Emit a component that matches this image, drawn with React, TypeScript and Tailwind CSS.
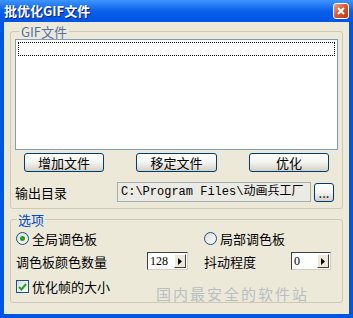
import React from 'react';

const cjk = '"SimSun", "Noto Sans CJK SC", "Liberation Mono", monospace';
const mono = '"Liberation Mono", "Noto Sans CJK SC", monospace';

// XP style push button
const XpButton: React.FC<{ label: string; className?: string }> = ({ label, className }) => (
  <button
    className={`h-[19px] rounded-[3px] border border-[#003C74] bg-gradient-to-b from-[#FFFFFF] via-[#F3F3EF] to-[#D6D0C5] text-[13px] leading-none text-black ${className ?? ''}`}
  >
    {label}
  </button>
);

const Radio: React.FC<{ checked?: boolean; label: string }> = ({ checked, label }) => (
  <div className="flex items-center gap-[3px]">
    <span className="flex h-[13px] w-[13px] items-center justify-center rounded-full border border-[#1C5180] bg-gradient-to-br from-[#DCDCD7] to-[#FFFFFF]">
      {checked && <span className="h-[5px] w-[5px] rounded-full bg-[#21A121]" />}
    </span>
    <span className="text-[13px] leading-none">{label}</span>
  </div>
);

const Spin: React.FC<{ value: string; className?: string }> = ({ value, className }) => (
  <div className={`flex h-[18px] items-center border border-t-[#404040] border-l-[#404040] border-b-[#D4D0C8] border-r-[#D4D0C8] bg-white ${className ?? ''}`}>
    <span className="flex-1 pl-[2px] text-[12px] leading-none" style={{ fontFamily: '"Liberation Serif", serif' }}>{value}</span>
    <span className="mr-[1px] flex h-[14px] w-[12px] items-center justify-center border border-t-white border-l-white border-b-[#404040] border-r-[#404040] bg-[#ECE9D8]">
      <svg width="4" height="7" viewBox="0 0 4 7"><path d="M0 0 L4 3.5 L0 7 Z" fill="#000" /></svg>
    </span>
  </div>
);

export default function App() {
  return (
    <div className="relative flex h-[318px] w-[353px] flex-col bg-[#0055E5] text-black" style={{ fontFamily: cjk }}>
      {/* title bar */}
      <div className="flex h-[22px] items-center justify-between bg-gradient-to-b from-[#3D95FF] via-[#0A5FEA] to-[#0055E5] pl-[4px] pr-[4px]">
        <span className="text-[13px] font-bold text-white" style={{ textShadow: '1px 1px 0 #0A1E70' }}>批优化GIF文件</span>
        <span className="flex h-[16px] w-[16px] items-center justify-center rounded-[3px] border border-white bg-gradient-to-br from-[#E8A08A] via-[#D8562E] to-[#B83A14]">
          <svg width="8" height="8" viewBox="0 0 8 8"><path d="M1 1 L7 7 M7 1 L1 7" stroke="#fff" strokeWidth="2" /></svg>
        </span>
      </div>

      {/* client area */}
      <div className="mx-[4px] mb-[4px] flex flex-1 flex-col bg-[#ECE9D8] px-[6px] pt-[3px]">
        <fieldset className="rounded-[3px] border border-[#D0C9B8] px-[4px] pb-[6px]">
          <legend className="ml-[4px] px-[2px] text-[13px] leading-[13px] text-[#5470A8]">GIF文件</legend>
          <div className="mt-[1px] h-[111px] border border-[#7F9DB9] bg-white p-[2px]">
            <div className="h-[14px] border border-dotted border-black" />
          </div>
          <div className="mt-[3px] flex justify-between px-[9px]">
            <XpButton label="增加文件" className="w-[80px]" />
            <XpButton label="移定文件" className="w-[81px]" />
            <XpButton label="优化" className="w-[80px]" />
          </div>
          <div className="mt-[10px] flex items-center">
            <span className="w-[102px] text-[13px] leading-none">输出目录</span>
            <div
              className="flex h-[20px] w-[194px] items-center whitespace-nowrap border border-[#A5ACB2] bg-[#EBEBE4] pl-[3px] text-[12px] leading-none"
              style={{ fontFamily: mono }}
            >
              C:\Program Files\动画兵工厂
            </div>
            <XpButton label="..." className="ml-[3px] w-[20px]" />
          </div>
        </fieldset>

        <fieldset className="mt-[4px] rounded-[3px] border border-[#D0C9B8] px-[5px] pb-[9px]">
          <legend className="ml-[1px] px-[1px] text-[13px] leading-[13px] text-[#0046D5]">选项</legend>
          <div className="mt-[6px] flex">
            <div className="w-[188px]"><Radio checked label="全局调色板" /></div>
            <Radio label="局部调色板" />
          </div>
          <div className="mt-[7px] flex items-center">
            <span className="w-[131px] text-[13px] leading-none">调色板颜色数量</span>
            <Spin value="128" className="w-[41px]" />
            <span className="ml-[16px] w-[87px] whitespace-nowrap text-[13px] leading-none">抖动程度</span>
            <Spin value="0" className="w-[40px]" />
          </div>
          <div className="mt-[10px] flex items-center gap-[3px]">
            <span className="flex h-[13px] w-[13px] items-center justify-center border border-[#1C5180] bg-gradient-to-br from-[#DCDCD7] to-white">
              <svg width="9" height="8" viewBox="0 0 9 8"><path d="M1 4 L3.5 6.5 L8 1" stroke="#21A121" strokeWidth="2" fill="none" /></svg>
            </span>
            <span className="text-[13px] leading-none">优化帧的大小</span>
          </div>
        </fieldset>
      </div>

      {/* faint watermark */}
      <span className="pointer-events-none absolute left-[156px] top-[283px] text-[15px] tracking-[2px] text-[#9AA3B5] opacity-60">国内最安全的软件站</span>
    </div>
  );
}
